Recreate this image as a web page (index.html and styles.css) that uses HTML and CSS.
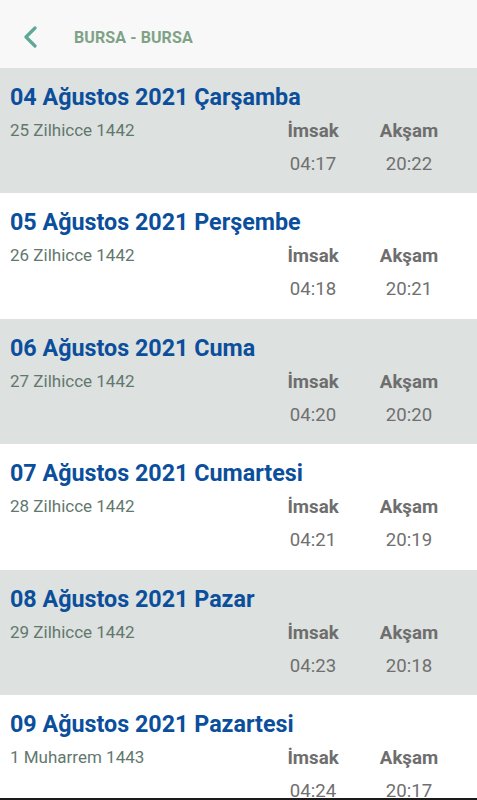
FILE: index.html
```html
<!DOCTYPE html>
<html lang="tr">
<head>
<meta charset="UTF-8">
<meta name="viewport" content="width=device-width, initial-scale=1.0">
<link rel="stylesheet" href="styles.css">
<title>Bursa - Bursa</title>
</head>
<body>
<div class="screen">
    <div class="topbar">
        <svg class="back" width="16" height="22" viewBox="0 0 16 22">
            <path d="M13 2 L4 11 L13 20" fill="none" stroke="#5fa898" stroke-width="3.2" stroke-linecap="round" stroke-linejoin="round"/>
        </svg>
        <span class="city">BURSA - BURSA</span>
    </div>

    <div class="list">
        <div class="day gray">
            <div class="date">04 Ağustos 2021 Çarşamba</div>
            <div class="info">
                <div class="hijri">25 Zilhicce 1442</div>
                <div class="times">
                    <div class="col"><span class="label">İmsak</span><span class="time">04:17</span></div>
                    <div class="col"><span class="label">Akşam</span><span class="time">20:22</span></div>
                </div>
            </div>
        </div>
        <div class="day">
            <div class="date">05 Ağustos 2021 Perşembe</div>
            <div class="info">
                <div class="hijri">26 Zilhicce 1442</div>
                <div class="times">
                    <div class="col"><span class="label">İmsak</span><span class="time">04:18</span></div>
                    <div class="col"><span class="label">Akşam</span><span class="time">20:21</span></div>
                </div>
            </div>
        </div>
        <div class="day gray">
            <div class="date">06 Ağustos 2021 Cuma</div>
            <div class="info">
                <div class="hijri">27 Zilhicce 1442</div>
                <div class="times">
                    <div class="col"><span class="label">İmsak</span><span class="time">04:20</span></div>
                    <div class="col"><span class="label">Akşam</span><span class="time">20:20</span></div>
                </div>
            </div>
        </div>
        <div class="day">
            <div class="date">07 Ağustos 2021 Cumartesi</div>
            <div class="info">
                <div class="hijri">28 Zilhicce 1442</div>
                <div class="times">
                    <div class="col"><span class="label">İmsak</span><span class="time">04:21</span></div>
                    <div class="col"><span class="label">Akşam</span><span class="time">20:19</span></div>
                </div>
            </div>
        </div>
        <div class="day gray">
            <div class="date">08 Ağustos 2021 Pazar</div>
            <div class="info">
                <div class="hijri">29 Zilhicce 1442</div>
                <div class="times">
                    <div class="col"><span class="label">İmsak</span><span class="time">04:23</span></div>
                    <div class="col"><span class="label">Akşam</span><span class="time">20:18</span></div>
                </div>
            </div>
        </div>
        <div class="day">
            <div class="date">09 Ağustos 2021 Pazartesi</div>
            <div class="info">
                <div class="hijri">1 Muharrem 1443</div>
                <div class="times">
                    <div class="col"><span class="label">İmsak</span><span class="time">04:24</span></div>
                    <div class="col"><span class="label">Akşam</span><span class="time">20:17</span></div>
                </div>
            </div>
        </div>
    </div>

    <div class="navedge"></div>
</div>
</body>
</html>
```

FILE: styles.css
```css
body {
    margin: 0;
    font-family: Roboto, "Noto Sans", sans-serif;
    background-color: #FFFFFF;
}

.screen {
    height: 800px;
    display: flex;
    flex-direction: column;
    overflow: hidden;
}

.topbar {
    height: 68px;
    flex-shrink: 0;
    box-sizing: border-box;
    display: flex;
    align-items: center;
    background-color: #F8F8F8;
    padding: 6px 0 0 22px;
}

.back {
    display: block;
}

.city {
    margin-left: 36px;
    font-size: 16px;
    font-weight: bold;
    color: #7FA287;
    letter-spacing: 0.1px;
}

.list {
    flex: 1;
    overflow: hidden;
}

.day {
    height: 125.4px;
    box-sizing: border-box;
    padding: 15px 20px 0 10px;
    background-color: #FFFFFF;
}

.day.gray {
    background-color: #DDE1DF; /* через строку */
}

.date {
    font-size: 23.3px;
    font-weight: bold;
    color: #0B4F9C;
    line-height: 28px;
}

.info {
    display: flex;
    align-items: flex-start;
    margin-top: 9px;
}

.hijri {
    flex: 1;
    font-size: 17px;
    color: #62786E;
    line-height: 20px;
}

.times {
    display: flex;
}

.col {
    width: 96px;
    display: flex;
    flex-direction: column;
    align-items: center;
}

.label {
    font-size: 18.7px;
    font-weight: bold;
    color: #6E6E6E;
    line-height: 22px;
}

.time {
    font-size: 18.6px;
    color: #707070;
    line-height: 22px;
    margin-top: 11px;
}

.navedge {
    height: 2px;
    flex-shrink: 0;
    background-color: #1A1A1A;
}
```
